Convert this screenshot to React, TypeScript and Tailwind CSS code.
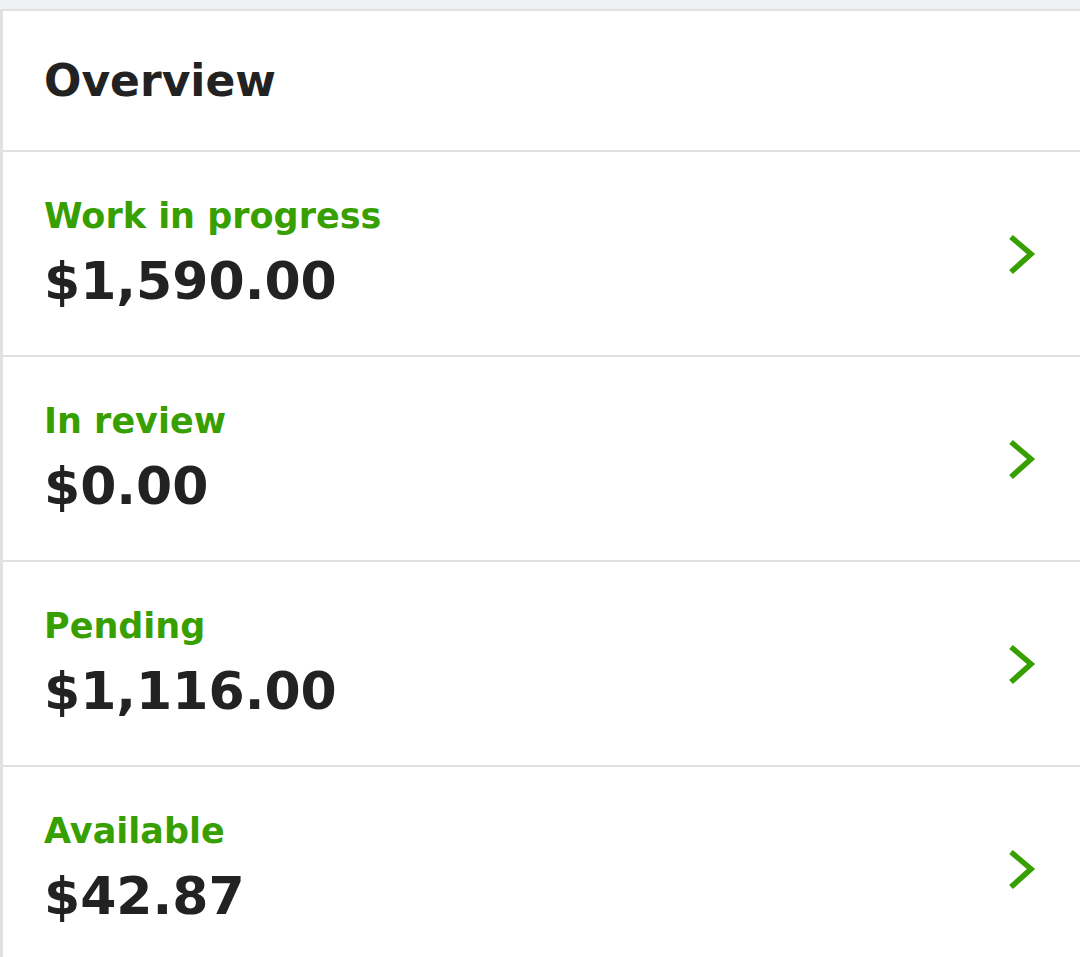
import React from "react";

const rows = [
  { label: "Work in progress", amount: "$1,590.00" },
  { label: "In review", amount: "$0.00" },
  { label: "Pending", amount: "$1,116.00" },
  { label: "Available", amount: "$42.87" },
];

function Chevron() {
  return (
    <svg width="40" height="50" viewBox="0 0 40 50" fill="none">
      <path d="M10 8 L30 25 L10 43" stroke="#37a000" strokeWidth="5.5" strokeLinecap="butt" strokeLinejoin="miter" />
    </svg>
  );
}

export default function App() {
  return (
    <div className="w-[1080px] h-[957px] overflow-hidden bg-[#eef1f2] pt-[9px]" style={{ fontFamily: "'DejaVu Sans', 'Liberation Sans', sans-serif" }}>
      <div className="bg-white border-t-2 border-l-[3px] border-[#e0e1e1] h-full">
        <div className="h-[141px] flex items-center pl-[41px] border-b-2 border-[#e0e1e1]">
          <h1 className="text-[44px] font-bold text-[#222] leading-none">Overview</h1>
        </div>
        {rows.map((r) => (
          <div key={r.label} className="h-[205px] flex items-center justify-between pl-[41px] pr-[39px] border-b-2 border-[#e0e1e1]">
            <div className="flex flex-col gap-[15px]">
              <span className="text-[35px] font-bold text-[#37a000] leading-[40px]">{r.label}</span>
              <span className="text-[52px] font-bold text-[#222] leading-[60px]">{r.amount}</span>
            </div>
            <Chevron />
          </div>
        ))}
      </div>
    </div>
  );
}
